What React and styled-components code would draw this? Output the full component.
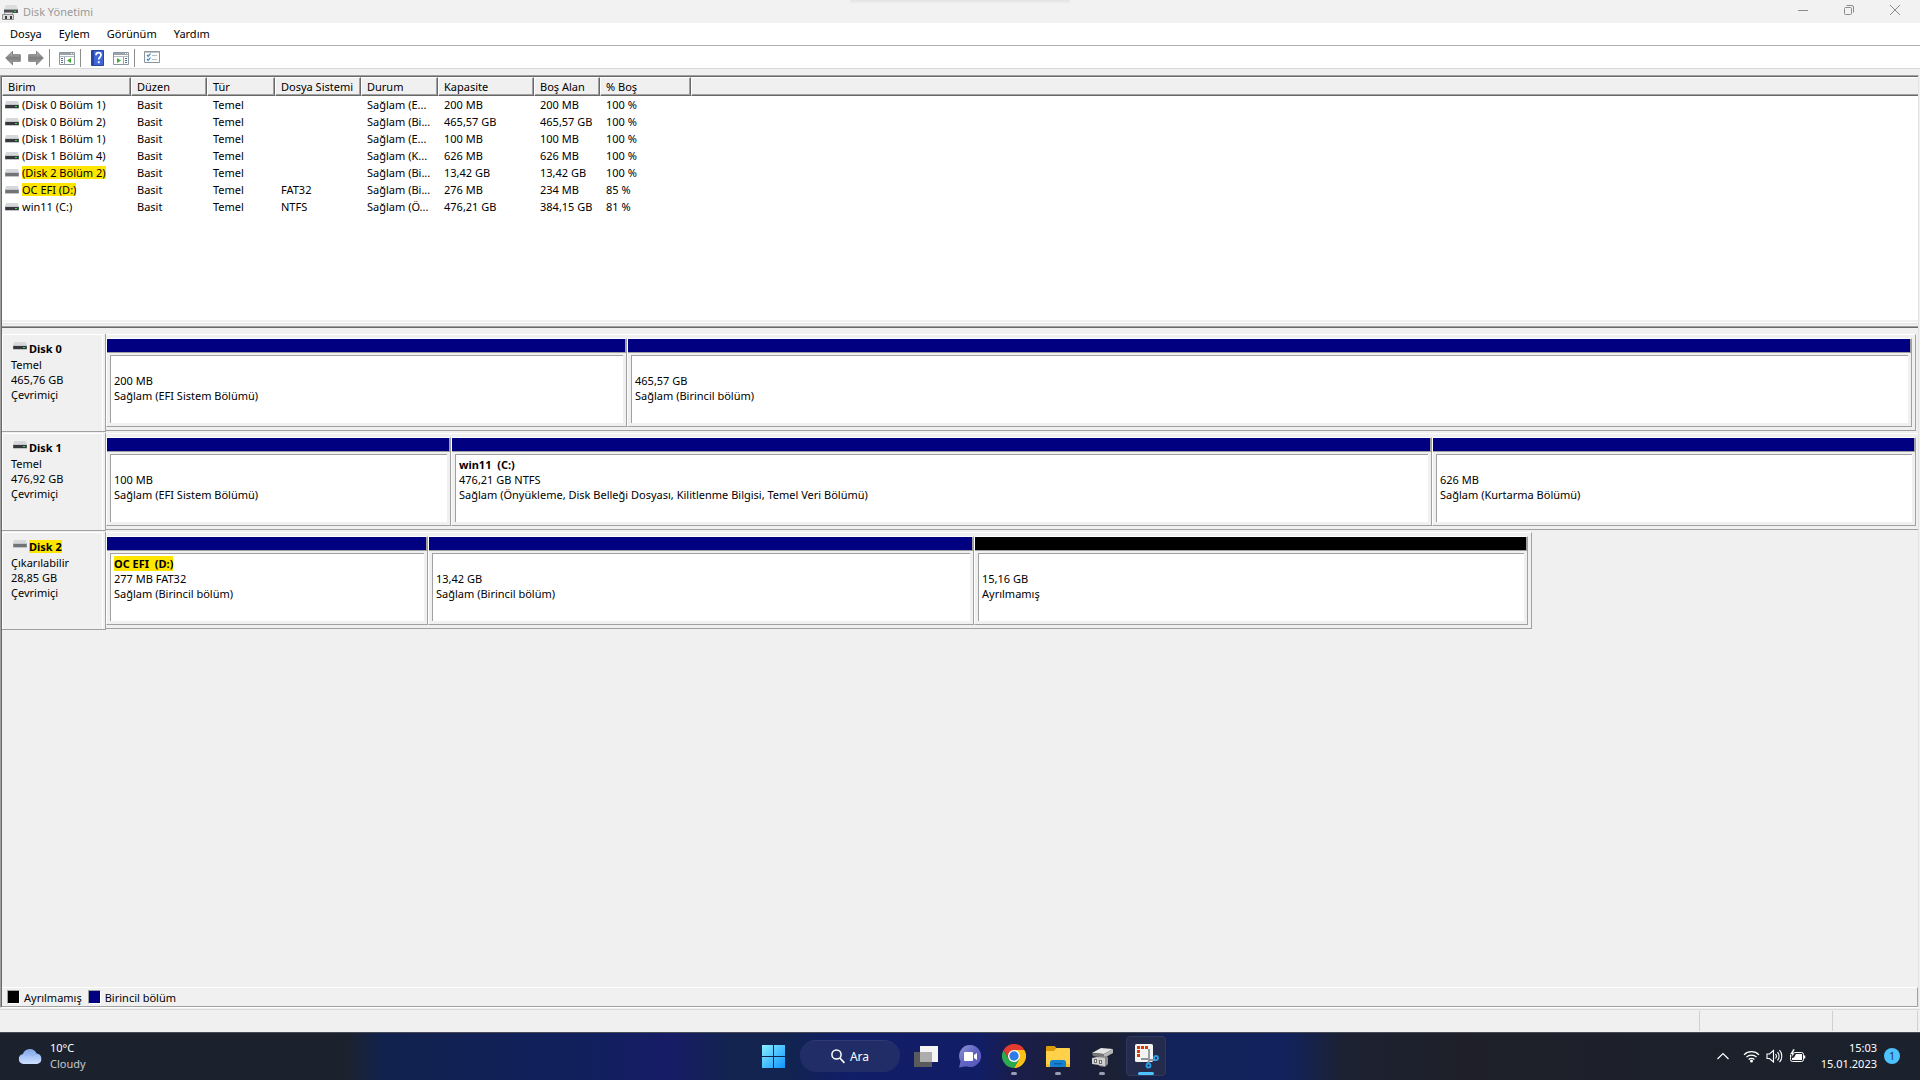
import React from "react"
import styled, { createGlobalStyle } from "styled-components";

const GlobalStyle = createGlobalStyle`
  * {
    box-sizing: border-box;
  }
  body {
    margin: 0;
    background: #f0f0f0;
    font-family: "Noto Sans", "Open Sans", sans-serif;
    font-size: 11px;
    line-height: 15px;
    color: #000;
  }
  button {
    font: inherit;
    color: inherit;
    border: 0;
    padding: 0;
    background: none;
  }
  svg {
    display: block;
  }
`;

const Page = styled.div`
  display: flex;
  flex-direction: column;
  min-height: 100vh;
`;

/* ---------- title, menu, toolbar ---------- */
const TitleBar = styled.header`
  display: flex;
  align-items: center;
  height: 23px;
  padding: 0 2px;
  background: linear-gradient(#e4e4e4, #f2f2f2) center top / 220px 4px no-repeat #f2f2f2;
  color: #999;
`;
const Title = styled.h1`
  flex: 1;
  margin: 0 0 0 5px;
  font-size: 11px;
  font-weight: normal;
`;
const WindowButton = styled.button`
  display: flex;
  justify-content: center;
  align-items: center;
  width: 46px;
  height: 20px;
  align-self: flex-start;
`;
const MenuBar = styled.nav`
  display: flex;
  align-items: center;
  gap: 17px;
  height: 23px;
  padding: 0 10px 2px;
  background: #fff;
  border-bottom: 1px solid #b0b0b6;
`;
const ToolBar = styled.div`
  display: flex;
  align-items: center;
  height: 23px;
  padding: 2px 0 0 1px;
  background: #fff;
  border-bottom: 1px solid #d9d9d9;
`;
const ToolButton = styled.button`
  display: flex;
  justify-content: center;
  width: 23px;
`;
const Separator = styled.span`
  width: 1px;
  height: 18px;
  margin: 0 5px 0 2px;
  background: #8c8c8c;
`;

/* ---------- main panes ---------- */
const Panes = styled.main`
  flex: 1;
  display: flex;
  flex-direction: column;
  margin: 6px 1px 0 0;
  border: 1px solid #a0a0a0;
  border-right-color: #e3e3e3;
  border-bottom: 1px solid #fff;
`;
const PanesInner = styled.div`
  flex: 1;
  display: flex;
  flex-direction: column;
  border-left: 1px solid #696969;
  border-top: 1px solid #696969;
`;
const VolumePane = styled.section`
  height: 243px;
  background: #fff;
`;
const VolumeTable = styled.table`
  width: 100%;
  table-layout: fixed;
  border-spacing: 0;
  text-align: left;

  th {
    height: 19px;
    padding: 0 0 0 5px;
    font-weight: normal;
    line-height: 15px;
    white-space: nowrap;
    background: #f0f0f0;
    border-top: 1px solid #fff;
    border-left: 1px solid #fff;
    border-right: 1px solid #696969;
    border-bottom: 1px solid #696969;
    box-shadow: inset -1px -1px #a0a0a0;
    &:last-child {
      border-right: 0;
      box-shadow: inset 0 -1px #a0a0a0;
    }
  }
  td {
    height: 17px;
    padding: 0 5px 0 6px;
    line-height: 17px;
    white-space: nowrap;
    overflow: hidden;
    text-overflow: ellipsis;
  }
  td:first-child {
    padding-left: 3px;
  }
  td:nth-child(7) {
    padding-right: 0;
  }
`;
const VolumeName = styled.div`
  display: flex;
  align-items: center;
  gap: 3px;
`;
const Mark = styled.mark`
  color: inherit;
  background: ${(p) => (p.$on ? "#ffe600" : "none")};
  white-space: pre;
  line-height: 13px;
`;
const Splitter = styled.div`
  height: 8px;
  border-bottom: 1px solid #696969;
  box-shadow: inset 0 -1px #a0a0a0, inset 0 -3px #f0f0f0, inset 0 -4px #e3e3e3, inset 0 -5px #fff;
`;
const DiskPane = styled.section`
  flex: 1;
  padding-top: 6px;
`;
const DiskRow = styled.div`
  display: flex;
  align-items: flex-start;
  margin-bottom: 1px;
`;
const DiskHead = styled.div`
  flex: none;
  width: 104px;
  height: 98px;
  padding-right: 2px;
  border-right: 1px solid #a0a0a0;
  border-bottom: 1px solid #a0a0a0;
`;
const DiskLabel = styled.div`
  height: 97px;
  padding: 7px 0 0 8px;
  border: 1px solid #fff;
  border-bottom: 0;
`;
const DiskName = styled.div`
  display: flex;
  align-items: flex-start;
  gap: 2px;
  height: 15px;
  padding-left: 2px;
  font-weight: bold;
`;
const LaneArea = styled.div`
  flex: 1;
  display: grid;
  grid-template-columns: minmax(0, ${(p) => p.$used}fr) minmax(0, ${(p) => p.$rest}fr);
`;
const Lane = styled.div`
  display: grid;
  grid-template-columns: ${(p) => p.$cols.map((c) => `minmax(0, ${c}fr)`).join(" ")};
  height: 97px;
  padding: 3px ${(p) => (p.$full ? 2 : 3)}px 3px 0;
  border-top: 1px solid #fff;
  border-bottom: 1px solid #a0a0a0;
  border-right: ${(p) => (p.$full ? "0" : "1px solid #a0a0a0")};
`;
const Partition = styled.div`
  display: flex;
  flex-direction: column;
  border: 1px solid #a0a0a0;
  border-top-color: #fff;
  border-left-color: #fff;
`;
const Bar = styled.div`
  height: 14px;
  background: ${(p) => p.$color};
  border-right: 1px solid #a0a0a0;
  border-bottom: 1px solid #a0a0a0;
`;
const PartitionBody = styled.div`
  flex: 1;
  margin: 2px 3px 3px;
  padding: 2px 3px;
  background: #fff;
  border-top: 1px solid #a0a0a0;
  border-left: 1px solid #a0a0a0;
  white-space: nowrap;
  overflow: hidden;
`;
const Line = styled.div`
  height: 15px;
  font-weight: ${(p) => (p.$bold ? "bold" : "normal")};
`;
const Legend = styled.footer`
  display: flex;
  align-items: center;
  gap: 6px;
  height: 20px;
  padding-left: 5px;
  border-top: 1px solid #fff;
  border-right: 1px solid #a0a0a0;
  border-bottom: 1px solid #a0a0a0;
`;
const LegendItem = styled.span`
  display: flex;
  align-items: center;
  gap: 4px;
`;
const Swatch = styled.i`
  width: 13px;
  height: 14px;
  background: ${(p) => p.$color};
  border: 1px solid #fff;
  border-top-color: #a0a0a0;
  border-left-color: #a0a0a0;
`;
const StatusBar = styled.div`
  display: flex;
  justify-content: flex-end;
  height: 23px;
  margin-top: 1px;
  padding: 1px 2px 1px 0;
  border-top: 1px solid #d9d9d9;
`;
const StatusCell = styled.span`
  width: ${(p) => p.$width}px;
  border-right: 1px solid #d0d0d0;
`;

/* ---------- taskbar ---------- */
const TaskBar = styled.footer`
  display: grid;
  grid-template-columns: 1fr auto 1fr;
  align-items: center;
  height: 48px;
  padding-bottom: 1px;
  color: #fff;
  border-top: 1px solid #474b58;
  background: linear-gradient(
    90deg,
    #1c222d 0%,
    #1b222d 18%,
    #12224e 20%,
    #11205e 31%,
    #181c66 35%,
    #12244f 38%,
    #12244f 41%,
    #111e68 44%,
    #111e66 51%,
    #1a1d48 53%,
    #1b2034 58%,
    #12225a 61%,
    #12225c 67%,
    #1c2232 70%,
    #1e1f29 76%,
    #1b222d 100%
  );
`;
const Weather = styled.button`
  display: flex;
  align-items: center;
  gap: 7px;
  padding-left: 18px;
  text-align: left;
  line-height: 16px;
  span {
    color: #c6c9d0;
  }
`;
const Apps = styled.div`
  display: flex;
  align-items: center;
`;
const AppButton = styled.button`
  position: relative;
  display: flex;
  justify-content: center;
  align-items: center;
  width: 40px;
  height: 40px;
  margin: 0 2px;
  border-radius: 4px;
  border: 1px solid ${(p) => (p.$active ? "#323a5c" : "transparent")};
  background: ${(p) => (p.$active ? "#242b4d" : "none")};
  &:after {
    content: "";
    display: ${(p) => (p.$active || p.$open ? "block" : "none")};
    position: absolute;
    bottom: 0;
    width: ${(p) => (p.$active ? 16 : 6)}px;
    height: 3px;
    border-radius: 2px;
    background: ${(p) => (p.$active ? "#4cc2ff" : "#9a9db0")};
  }
`;
const SearchButton = styled.button`
  display: flex;
  justify-content: center;
  align-items: center;
  gap: 5px;
  width: 100px;
  height: 32px;
  margin: 0 4px;
  border-radius: 16px;
  font-size: 12px;
  background: #212d66;
  border-top: 1px solid #2f3a72;
`;
const Tray = styled.div`
  display: flex;
  justify-content: flex-end;
  align-items: center;
  gap: 7px;
  padding-right: 20px;
`;
const TrayIcons = styled.div`
  display: flex;
  align-items: center;
  gap: 6px;
  margin-right: 8px;
`;
const TrayMore = styled.button`
  margin-right: 8px;
`;
const Clock = styled.time`
  text-align: right;
  line-height: 16px;
`;
const Badge = styled.span`
  width: 16px;
  height: 16px;
  border-radius: 50%;
  font-size: 10px;
  line-height: 16px;
  text-align: center;
  color: #16303f;
  background: #4cc2ff;
`;

/* ---------- icons ---------- */
const DriveIcon = ({ removable }) => (
  <svg width="14" height="8" viewBox="0 0 14 8" aria-hidden="true">
    <path d="M1 0h12l1 4H0z" fill="#d6d8dc" />
    <path d="M0 3h14v5H0z" fill="#c3c5c8" />
    <path d="M0 4h14v3H0z" fill={removable ? "#8b8d90" : "#55595c"} />
    <path d="M1 4h12v3H1z" fill={removable ? "#717376" : "#36393c"} />
    {!removable && <path d="M10 5h2v1h-2z" fill="#2fe04a" />}
  </svg>
)
const ManagerIcon = () => (
  <svg width="16" height="16" viewBox="0 0 16 16" aria-hidden="true">
    <path d="M4 1h10l2 4H2z" fill="#dcdddd" />
    <path d="M2 5h14v4H2z" fill="#4b4e50" />
    <path d="M2 5h14v1H2z" fill="#a0a3a5" />
    <path d="M12 7h2v1h-2z" fill="#2fd04a" />
    <path d="M2.500 8.500h8v3h-8z" fill="#e8e8e8" stroke="#999" />
    <path d="M.5 10.500h11v5H.5z" fill="#dedede" stroke="#909090" />
    <path d="M3 12h2v3H3zM8 12h2v3H8z" fill="#3c3c3c" />
  </svg>
)
const ArrowIcon = ({ flip }) => (
  <svg width="16" height="16" viewBox="0 0 16 16" aria-hidden="true">
    <defs>
      <linearGradient id="arrow" x2="0" y2="1">
        <stop offset="0" stopColor="#c4c4c4" />
        <stop offset=".5" stopColor="#7d7d7d" />
        <stop offset="1" stopColor="#b0b0b0" />
      </linearGradient>
    </defs>
    <path
      d="M.7 8 7.500 1.200v3.500h7.800v6.600H7.500v3.500z"
      fill="url(#arrow)"
      stroke="#808080"
      transform={flip ? "matrix(-1 0 0 1 16 0)" : undefined}
    />
  </svg>
)
const ConsoleIcon = ({ right }) => (
  <svg width="16" height="16" viewBox="0 0 16 16" aria-hidden="true">
    <path d="M.5 2.500h15v12H.5z" fill="#fff" stroke="#8d979f" />
    <path d="M1 3h14v2H1z" fill="#9aa4ad" />
    <path d="M12 3h1v1h-1zM14 3h1v1h-1z" fill="#fff" />
    <path d="M1 6.500h14" stroke="#b3bac0" />
    <path d={right ? "M10.500 7v8" : "M5.500 7v8"} stroke="#9aa4ad" />
    <path d={right ? "M12 8.500h2M12 10.500h2M12 12.500h2" : "M2 8.500h2M2 10.500h2M2 12.500h2"} stroke="#4f6f93" />
    <path d={right ? "M4 8v5l4-2.500z" : "M12 8v5l-4-2.500z"} fill="#3fae2a" />
  </svg>
)
const HelpIcon = () => (
  <svg width="14" height="16" viewBox="0 0 14 16" aria-hidden="true">
    <path d="M.5.5h12v15H.5z" fill="#3f66d6" stroke="#27459f" />
    <path d="M1 1h2v14H1z" fill="#2a479f" />
    <path d="M5 5.200C5 3.400 6.100 2.700 7.500 2.700s2.500.8 2.500 2.300C10 7 7.700 7.200 7.700 9.600" fill="none" stroke="#fff" strokeWidth="1.700" />
    <path d="M6.800 11.200h1.900v2H6.800z" fill="#fff" />
  </svg>
)
const ChecklistIcon = () => (
  <svg width="16" height="16" viewBox="0 0 16 16" aria-hidden="true">
    <path d="M.5 1.500h15v11H.5z" fill="#fbfbfb" stroke="#8e969d" />
    <path d="M1 2h14" stroke="#8e969d" />
    <path d="m3 5 1.200 1.400L6.500 3.500M3 9l1.200 1.400 2.300-2.900" fill="none" stroke="#2f86cc" strokeWidth="1.200" />
    <path d="M8 5.500h5M8 9.500h5" stroke="#b9bdc1" />
  </svg>
)
const CloudIcon = () => (
  <svg width="25" height="17" viewBox="0 0 25 17" aria-hidden="true">
    <defs>
      <linearGradient id="cloud" x2="0" y2="1">
        <stop offset="0" stopColor="#7ea4e6" />
        <stop offset=".55" stopColor="#aac7f7" />
        <stop offset="1" stopColor="#cfe0fd" />
      </linearGradient>
    </defs>
    <path d="M5.500 16a5 5 0 0 1-.6-9.900A7.200 7.200 0 0 1 18.500 5.500 5.300 5.300 0 0 1 19 16z" fill="url(#cloud)" />
    <path d="M8 8c2-2.500 5-2 6.500.2 1.200-1.800 3-2.500 4.500-2.300" fill="none" stroke="#87aae8" opacity=".6" />
  </svg>
)
const StartIcon = () => (
  <svg width="24" height="24" viewBox="0 0 24 24" aria-hidden="true">
    <defs>
      <linearGradient id="start" x2="1" y2="1" gradientUnits="userSpaceOnUse" x1="0" y1="0" gradientTransform="scale(24)">
        <stop offset="0" stopColor="#8cf0ff" />
        <stop offset="1" stopColor="#0a93ff" />
      </linearGradient>
    </defs>
    <path d="M0 1h11v11H0zM12 1h11v11H12zM0 13h11v11H0zM12 13h11v11H12z" fill="url(#start)" />
  </svg>
)
const SearchIcon = () => (
  <svg width="14" height="15" viewBox="0 0 14 15" aria-hidden="true">
    <circle cx="5.500" cy="5.500" r="4.600" fill="none" stroke="#fff" strokeWidth="1.500" />
    <path d="m8.900 9 4.500 4.800" stroke="#fff" strokeWidth="1.700" />
  </svg>
)
const TaskViewIcon = () => (
  <svg width="24" height="24" viewBox="0 0 24 24" aria-hidden="true">
    <path d="M0 8h18v15H0z" fill="#5a5a5c" />
    <path d="M6 2h18v16H6z" fill="#f4f4f4" />
    <path d="M6 8h12v10H6z" fill="#adadad" />
  </svg>
)
const ChatIcon = () => (
  <svg width="24" height="24" viewBox="0 0 24 24" aria-hidden="true">
    <defs>
      <linearGradient id="chat" x2="1" y2="1">
        <stop offset="0" stopColor="#8f96cf" />
        <stop offset=".5" stopColor="#6264c4" />
        <stop offset="1" stopColor="#5455bd" />
      </linearGradient>
    </defs>
    <path d="M12.500 1a11 11 0 1 1-4.500 21.200L1 23.500l1.600-6A11 11 0 0 1 12.500 1z" fill="url(#chat)" />
    <rect x="6" y="8" width="9" height="9" rx="1" fill="#fff" />
    <path d="m16 11 3-2v7l-3-2z" fill="#fff" />
  </svg>
)
const ChromeIcon = () => (
  <svg width="24" height="24" viewBox="0 0 24 24" aria-hidden="true">
    <path d="M12 6h10.400A12 12 0 0 1 12 24l5.200-9z" fill="#fbc116" />
    <path d="M1.600 6A12 12 0 0 0 12 24l5.200-9L12 12 6.800 15z" fill="#2da94f" />
    <path d="M1.600 6A12 12 0 0 1 22.400 6H12L6.800 15z" fill="#e33b2e" />
    <circle cx="12" cy="12" r="6" fill="#fff" />
    <circle cx="12" cy="12" r="4.700" fill="#2f7bea" />
  </svg>
)
const ExplorerIcon = () => (
  <svg width="24" height="24" viewBox="0 0 24 24" aria-hidden="true">
    <path d="M0 3.200C0 2.500.5 2 1.200 2h7.300L11 4.500 8.500 8H0z" fill="#dc9b08" />
    <path d="M0 7h8l2.500-3H23a1 1 0 0 1 1 1v17.500H0z" fill="#ffd04a" />
    <path d="M0 20h24v3H0z" fill="#f7bd2d" />
    <path d="M4 23v-4.500A2.500 2.500 0 0 1 6.500 16h11a2.500 2.500 0 0 1 2.500 2.500V23z" fill="#1581d0" />
    <path d="M8 19h8v1.500H8z" fill="#0b61a8" />
  </svg>
)
const DiskAppIcon = () => (
  <svg width="24" height="24" viewBox="0 0 24 24" aria-hidden="true">
    <path d="m2 9 9-5 12 1-9 5z" fill="#e4e4e4" />
    <path d="m2 9 12 1v4L3 12z" fill="#777" />
    <path d="m14 10 9-5v4l-9 5z" fill="#b5b5b5" />
    <path d="m9 13 8-1 1 2v6l-3 3-6-1z" fill="#8b8b8b" />
    <path d="m2 14 5-1 8 1v8l-6-1-7-1z" fill="#cfcfcf" />
    <path d="M4 15h3v4H4zM9 16h3v4H9z" fill="#6f6f6f" />
    <path d="M5 16h1v2H5zM10 17h1v2h-1z" fill="#efefef" />
  </svg>
)
const SnipIcon = () => (
  <svg width="25" height="25" viewBox="0 0 25 25" aria-hidden="true">
    <rect x="1" y="0" width="18" height="18" rx="1.500" fill="#f3f3f3" />
    <path d="M3 2h3v3H3zM7 2h3v3H7zM11 2h3v3h-3zM3 6h3v3H3zM3 10h3v3H3z" fill="#d83b01" />
    <path d="M15 5v11h7M15 16l-1 4M7 15h7" fill="none" stroke="#8d9399" strokeWidth="1.800" />
    <circle cx="22" cy="14" r="2" fill="none" stroke="#2a9fe8" strokeWidth="1.800" />
    <circle cx="14.500" cy="21.500" r="2" fill="none" stroke="#2a9fe8" strokeWidth="1.800" />
  </svg>
)
const ChevronIcon = () => (
  <svg width="12" height="8" viewBox="0 0 12 8" aria-hidden="true">
    <path d="m.5 7 5.500-5.500L11.500 7" fill="none" stroke="#fff" strokeWidth="1.200" />
  </svg>
)
const WifiIcon = () => (
  <svg width="17" height="14" viewBox="0 0 17 14" aria-hidden="true">
    <g fill="none" stroke="#fff" strokeWidth="1.200">
      <path d="M1 5.800a10.500 10.500 0 0 1 15 0M3.400 8.200a7.200 7.200 0 0 1 10.200 0M5.600 10.500a4.100 4.100 0 0 1 5.800 0" />
    </g>
    <circle cx="8.500" cy="12" r="1.500" fill="#fff" />
  </svg>
)
const SpeakerIcon = () => (
  <svg width="17" height="14" viewBox="0 0 17 14" aria-hidden="true">
    <g fill="none" stroke="#fff" strokeWidth="1.100">
      <path d="M1 5v4.500h2.500L7.500 13V1.500L3.500 5zM9.500 5a3.500 3.500 0 0 1 0 4.500M11.500 3.200a6 6 0 0 1 0 8.100M13.500 1.200a9 9 0 0 1 0 12" />
    </g>
  </svg>
)
const BatteryIcon = () => (
  <svg width="17" height="14" viewBox="0 0 17 14" aria-hidden="true">
    <rect x="1.500" y="3.500" width="13" height="9" rx="2" fill="none" stroke="#fff" />
    <path d="M7 5h6v6H3V9l2-.5z" fill="#fff" />
    <path d="M15.500 6.500v3" stroke="#fff" strokeWidth="1.500" />
    <path d="M4 0 1 5.500h2L2 9l4-5H4.200L6 0z" fill="#fff" stroke="#1b222d" strokeWidth=".5" />
  </svg>
)

/* ---------- data ---------- */
const columns = [
  { name: "Birim", width: 129 },
  { name: "Düzen", width: 76 },
  { name: "Tür", width: 68 },
  { name: "Dosya Sistemi", width: 86 },
  { name: "Durum", width: 77 },
  { name: "Kapasite", width: 96 },
  { name: "Boş Alan", width: 66 },
  { name: "% Boş", width: 91 },
]

const volumes = [
  { name: "(Disk 0 Bölüm 1)", status: "Sağlam (E...", size: "200 MB", free: "200 MB", pct: "100 %" },
  { name: "(Disk 0 Bölüm 2)", status: "Sağlam (Bi...", size: "465,57 GB", free: "465,57 GB", pct: "100 %" },
  { name: "(Disk 1 Bölüm 1)", status: "Sağlam (E...", size: "100 MB", free: "100 MB", pct: "100 %" },
  { name: "(Disk 1 Bölüm 4)", status: "Sağlam (K...", size: "626 MB", free: "626 MB", pct: "100 %" },
  { name: "(Disk 2 Bölüm 2)", status: "Sağlam (Bi...", size: "13,42 GB", free: "13,42 GB", pct: "100 %", removable: true },
  { name: "OC EFI (D:)", fs: "FAT32", status: "Sağlam (Bi...", size: "276 MB", free: "234 MB", pct: "85 %", removable: true },
  { name: "win11 (C:)", fs: "NTFS", status: "Sağlam (Ö...", size: "476,21 GB", free: "384,15 GB", pct: "81 %" },
]

const NAVY = "#000080"

const disks = [
  {
    name: "Disk 0", type: "Temel", size: "465,76 GB", used: 1810, rest: 2,
    parts: [
      { w: 521, size: "200 MB", status: "Sağlam (EFI Sistem Bölümü)" },
      { w: 1285, size: "465,57 GB", status: "Sağlam (Birincil bölüm)" },
    ],
  },
  {
    name: "Disk 1", type: "Temel", size: "476,92 GB", used: 1812, rest: 0,
    parts: [
      { w: 345, size: "100 MB", status: "Sağlam (EFI Sistem Bölümü)" },
      { w: 981, label: "win11  (C:)", size: "476,21 GB NTFS", status: "Sağlam (Önyükleme, Disk Belleği Dosyası, Kilitlenme Bilgisi, Temel Veri Bölümü)" },
      { w: 484, size: "626 MB", status: "Sağlam (Kurtarma Bölümü)" },
    ],
  },
  {
    name: "Disk 2", type: "Çıkarılabilir", size: "28,85 GB", used: 1426, rest: 386, removable: true,
    parts: [
      { w: 322, label: "OC EFI  (D:)", size: "277 MB FAT32", status: "Sağlam (Birincil bölüm)" },
      { w: 546, size: "13,42 GB", status: "Sağlam (Birincil bölüm)" },
      { w: 554, size: "15,16 GB", status: "Ayrılmamış", color: "#000" },
    ],
  },
]

const Volumes = () => (
  <VolumePane>
    <VolumeTable>
      <colgroup>
        {columns.map((c) => <col key={c.name} width={c.width} />)}
        <col />
      </colgroup>
      <thead>
        <tr>
          {columns.map((c) => <th key={c.name} scope="col">{c.name}</th>)}
          <th />
        </tr>
      </thead>
      <tbody>
        {volumes.map((v) => (
          <tr key={v.name}>
            <td>
              <VolumeName>
                <DriveIcon removable={v.removable} />
                <Mark $on={v.removable}>{v.name}</Mark>
              </VolumeName>
            </td>
            <td>Basit</td>
            <td>Temel</td>
            <td>{v.fs}</td>
            <td>{v.status}</td>
            <td>{v.size}</td>
            <td>{v.free}</td>
            <td>{v.pct}</td>
            <td />
          </tr>
        ))}
      </tbody>
    </VolumeTable>
  </VolumePane>
)

const Disk = ({ disk }) => (
  <DiskRow>
    <DiskHead>
      <DiskLabel>
        <DiskName>
          <DriveIcon removable={disk.removable} />
          <Mark $on={disk.removable}>{disk.name}</Mark>
        </DiskName>
        <Line>{disk.type}</Line>
        <Line>{disk.size}</Line>
        <Line>Çevrimiçi</Line>
      </DiskLabel>
    </DiskHead>
    <LaneArea $used={disk.used} $rest={disk.rest}>
      <Lane $cols={disk.parts.map((p) => p.w)} $full={disk.rest === 0}>
        {disk.parts.map((p) => (
          <Partition key={p.size}>
            <Bar $color={p.color || NAVY} />
            <PartitionBody>
              <Line $bold><Mark $on={disk.removable && p.label}>{p.label}</Mark></Line>
              <Line>{p.size}</Line>
              <Line>{p.status}</Line>
            </PartitionBody>
          </Partition>
        ))}
      </Lane>
    </LaneArea>
  </DiskRow>
)

const App = () => (
  <>
    <GlobalStyle />
    <Page>
      <TitleBar>
        <ManagerIcon />
        <Title>Disk Yönetimi</Title>
        <WindowButton aria-label="Simge durumuna küçült">
          <svg width="10" height="10" viewBox="0 0 10 10"><path d="M0 5.500h10" stroke="#8c8c8c" /></svg>
        </WindowButton>
        <WindowButton aria-label="Geri yükle">
          <svg width="10" height="10" viewBox="0 0 10 10" fill="none" stroke="#8c8c8c">
            <rect x=".5" y="2.500" width="7" height="7" rx="1" />
            <path d="M2.500.5H8A1.500 1.500 0 0 1 9.500 2v5.500" />
          </svg>
        </WindowButton>
        <WindowButton aria-label="Kapat">
          <svg width="10" height="10" viewBox="0 0 10 10"><path d="m0 0 10 10M10 0 0 10" stroke="#8c8c8c" /></svg>
        </WindowButton>
      </TitleBar>
      <MenuBar>
        <button>Dosya</button>
        <button>Eylem</button>
        <button>Görünüm</button>
        <button>Yardım</button>
      </MenuBar>
      <ToolBar>
        <ToolButton aria-label="Geri"><ArrowIcon /></ToolButton>
        <ToolButton aria-label="İleri"><ArrowIcon flip /></ToolButton>
        <Separator />
        <ToolButton aria-label="Konsol ağacı"><ConsoleIcon /></ToolButton>
        <Separator />
        <ToolButton aria-label="Yardım"><HelpIcon /></ToolButton>
        <ToolButton aria-label="Eylem bölmesi"><ConsoleIcon right /></ToolButton>
        <Separator />
        <ToolButton aria-label="Ayarlar"><ChecklistIcon /></ToolButton>
      </ToolBar>

      <Panes>
        <PanesInner>
          <Volumes />
          <Splitter />
          <DiskPane>
            {disks.map((d) => <Disk key={d.name} disk={d} />)}
          </DiskPane>
          <Legend>
            <LegendItem><Swatch $color="#000" />Ayrılmamış</LegendItem>
            <LegendItem><Swatch $color={NAVY} />Birincil bölüm</LegendItem>
          </Legend>
        </PanesInner>
      </Panes>
      <StatusBar>
        <StatusCell $width={133} />
        <StatusCell $width={133} />
        <StatusCell $width={85} />
      </StatusBar>

      <TaskBar>
        <Weather>
          <CloudIcon />
          <div>
            <div>10°C</div>
            <span>Cloudy</span>
          </div>
        </Weather>
        <Apps>
          <AppButton aria-label="Başlat"><StartIcon /></AppButton>
          <SearchButton><SearchIcon />Ara</SearchButton>
          <AppButton aria-label="Görev görünümü"><TaskViewIcon /></AppButton>
          <AppButton aria-label="Sohbet"><ChatIcon /></AppButton>
          <AppButton aria-label="Chrome" $open><ChromeIcon /></AppButton>
          <AppButton aria-label="Dosya Gezgini" $open><ExplorerIcon /></AppButton>
          <AppButton aria-label="Disk Yönetimi" $open><DiskAppIcon /></AppButton>
          <AppButton aria-label="Ekran Alıntısı Aracı" $active><SnipIcon /></AppButton>
        </Apps>
        <Tray>
          <TrayIcons>
            <TrayMore aria-label="Gizli simgeler"><ChevronIcon /></TrayMore>
            <WifiIcon />
            <SpeakerIcon />
            <BatteryIcon />
          </TrayIcons>
          <Clock>
            <div>15:03</div>
            <div>15.01.2023</div>
          </Clock>
          <Badge>1</Badge>
        </Tray>
      </TaskBar>
    </Page>
  </>
)
export default App
